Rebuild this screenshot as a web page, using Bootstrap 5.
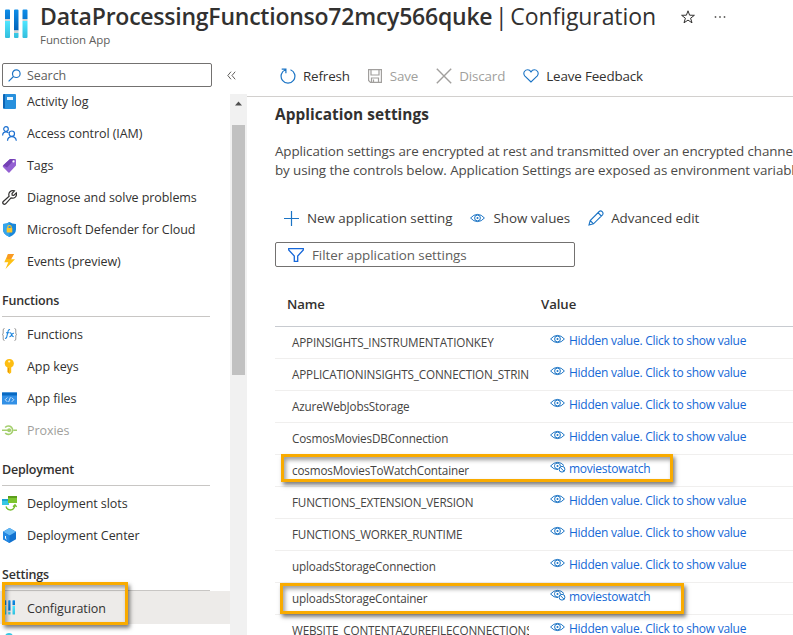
<!DOCTYPE html>
<html lang="en">
<head>
<meta charset="utf-8">
<title>Configuration</title>
<link href="https://cdn.jsdelivr.net/npm/bootstrap@5.3.0/dist/css/bootstrap.min.css" rel="stylesheet">
<style>
body{font-family:"Open Sans","Noto Sans",sans-serif;font-size:12.5px;letter-spacing:-.07px;color:#323130;height:635px;line-height:20px}
svg{flex:none;display:block}
.app-head{height:63px;padding:1px 0 0 5px}
.app-logo{margin-top:8px}
.app-title{font-size:23px;line-height:30px;letter-spacing:-.08px;word-spacing:-3.2px;margin:0 0 1px}
.app-title b{font-weight:600;letter-spacing:-.23px}
.app-sub{font-size:11.5px;color:#605e5c;line-height:16px;letter-spacing:-.06px}
.side{width:247px}
.search-box{width:210px;height:24px;margin-left:2px;border:1px solid #737170;border-radius:2px;color:#605e5c;padding-left:5px;gap:6px}
.search-box span{padding-top:2px}
.collapse-mark{margin-left:15px}
.side-list{width:230px;margin-top:-9px}
.side-scroll{height:541px;margin-top:7px}
.side-item{height:32px;padding:2px 0 0 2px;gap:10px}
.side-item svg{width:15px;height:15px;margin-top:-2px}
.side-item.off{color:#a19f9d}
.side-item.off svg{opacity:.75}
.side-item.on{background:#edebe9;height:33px;margin-top:-1px}
.side-title{height:40px;width:208px;margin:0 0 1px 2px;padding-top:14px;border-bottom:1px solid #c8c6c4;font-weight:600;letter-spacing:-.2px}
.bar{width:17px;background:#f1f1f1;padding-top:7px}
.thumb{width:13px;height:250px;background:#c1c1c1;margin-top:19px}
.cmds{height:34px;border-bottom:1px solid #d2d0ce;font-size:13.4px;letter-spacing:-.15px;padding:0 0 8px 33px}
.off-cmd{color:#a19f9d}
.gap-l{margin-left:18px}
.gap-s{margin-left:7px}
.pane{padding-left:28px;width:546px}
.pane h2{font-size:15.4px;font-weight:700;letter-spacing:.05px;line-height:20px;margin:8px 0 17px}
.desc{font-size:13.4px;line-height:19px;letter-spacing:-.1px;margin:0;color:#4b4a48}
.cmds2{font-size:13.4px;letter-spacing:-.03px;height:30px;margin-top:23px;padding-left:9px;color:#3f3e3c}
.filter{width:300px;height:25px;margin-top:9px;border:1px solid #737170;border-radius:2px;font-size:13.4px;letter-spacing:-.05px;color:#605e5c;padding-left:12px;gap:8px}
.grid-head{height:60px;border-bottom:1px solid #c8cbd0;font-size:13.2px;font-weight:600;padding-top:27px}
.grid-head div:first-child{padding-left:12px;width:266px}
.grid-row{height:32px;border-bottom:1px solid #f0efee}
.cell-name{width:254px;padding:0 0 0 17px;font-size:11.7px;line-height:30px;letter-spacing:-.16px;white-space:nowrap;overflow:hidden;color:#454442}
.cell-val{padding-left:21px;gap:4px;color:#1568d6;height:28px;font-size:12px;letter-spacing:-.26px}
.cell-val svg{margin-top:-5px}
.cell-val .hid{margin-right:-1px}
.callout{border:3px solid #f9ab00;box-shadow:2px 3px 4px rgba(0,0,0,.5),inset 2px 3px 4px rgba(0,0,0,.38);z-index:2}
.c-side{left:2px;top:-9px;width:126px;height:43px}
.c-one{left:6px;top:-1px;width:392px;height:28px}
.c-two{left:5px;top:0;width:404px;height:31px}
</style>
<script src="https://cdn.jsdelivr.net/npm/bootstrap@5.3.0/dist/js/bootstrap.bundle.min.js"></script>
</head>
<body class="bg-white overflow-hidden">
<svg width="0" height="0" class="position-absolute">
<defs>
<linearGradient id="gb" x1="0" y1="0" x2="0" y2="1"><stop offset="0" stop-color="#0f8de8"/><stop offset="1" stop-color="#0062b8"/></linearGradient>
<linearGradient id="gc" x1="0" y1="0" x2="0" y2="1"><stop offset="0" stop-color="#50e6ff"/><stop offset="1" stop-color="#32bedd"/></linearGradient>
</defs>
<symbol id="eye" viewBox="0 0 15 10"><g fill="none" stroke="#1b74c5"><path d="M.6 5Q3.6 1.4 7.5 1.4T14.4 5Q11.4 8.6 7.5 8.6T.6 5Z"/><circle cx="7.5" cy="5" r="2.9"/></g><circle cx="7.5" cy="5" r="1" fill="#1b74c5"/></symbol>
<symbol id="eyeoff" viewBox="0 0 16 12"><g fill="none" stroke="#1b74c5"><path d="M8 8.6Q3.500 8.600 .6 5Q3.600 1.400 7.500 1.400Q11.500 1.400 14 4.600M8.500 7.700A2.900 2.900 0 1 1 10.300 5"/><circle cx="12" cy="8.200" r="2.900"/><path d="M10 6.200l4 4"/></g><circle cx="7.500" cy="5" r="1" fill="#1b74c5"/></symbol>
<symbol id="sliders" viewBox="0 0 23 30"><path fill="url(#gb)" d="M0 10V1.500Q0 .5 1 .5H4Q5 .5 5 1.500V10ZM9 21.500V1.500Q9 .5 10 .5H12.500Q13.500 .5 13.500 1.500V21.500ZM17.500 10V1.500Q17.500 .5 18.500 .5H21.500Q22.500 .5 22.500 1.500V10Z"/><path fill="url(#gc)" d="M0 12H5V28Q5 29 4 29H1Q0 29 0 28ZM9 24H13.500V28Q13.500 29 12.500 29H10Q9 29 9 28ZM17.500 12H22.500V28Q22.500 29 21.500 29H18.500Q17.500 29 17.500 28Z"/><path fill="#d5d5d5" d="M0 10H5V12H0ZM9 21.500H13.500V24H9ZM17.500 10H22.500V12H17.500Z"/></symbol>
</svg>

<header class="app-head d-flex">
  <svg class="app-logo" width="23" height="30"><use href="#sliders"/></svg>
  <div class="ps-2 ms-1">
    <div class="d-flex align-items-center">
      <h1 class="app-title text-nowrap fw-normal"><b>DataProcessingFunctionso72mcy566quke</b> | Configuration</h1>
      <svg class="ms-4" width="16" height="16" viewBox="0 0 16 16"><path d="M8 1.800l1.600 4.400 4.800.1-3.800 2.900 1.400 4.600L8 11.100l-4 2.700 1.400-4.600L1.600 6.300l4.800-.1Z" fill="none" stroke="#323130"/></svg>
      <svg class="ms-3" width="14" height="4" viewBox="0 0 14 4"><g fill="#605e5c"><circle cx="3.500" cy="2" r=".9"/><circle cx="8" cy="2" r=".9"/><circle cx="12.500" cy="2" r=".9"/></g></svg>
    </div>
    <div class="app-sub">Function App</div>
  </div>
</header>

<div class="d-flex">
  <aside class="side flex-shrink-0">
    <div class="d-flex align-items-center">
      <div class="search-box d-flex align-items-center">
        <svg width="13" height="13" viewBox="0 0 13 13"><g fill="none" stroke="#1b74c5" stroke-width="1.200"><circle cx="8.300" cy="4.700" r="3.800"/><path d="M5.500 7.500L.6 12.400"/></g></svg><span>Search</span>
      </div>
      <svg class="collapse-mark" width="9" height="9" viewBox="0 0 9 9"><path d="M4 .7L.8 4.500 4 8.300M8.200 .7L5 4.500 8.200 8.300" fill="none" stroke="#605e5c"/></svg>
    </div>
    <div class="side-scroll d-flex overflow-hidden">
      <nav class="side-list flex-shrink-0">
        <div class="side-item d-flex align-items-center"><svg viewBox="0 0 15 15"><rect x="1" y="0" width="13" height="15" rx="1" fill="#2790dd"/><path d="M1 1v13h2V0Q1 0 1 1" fill="#0c64b5"/><rect x="5" y="3" width="6" height="3" fill="#e8f5ff"/></svg>Activity log</div>
        <div class="side-item d-flex align-items-center"><svg viewBox="0 0 15 15"><g fill="none" stroke="#1b6fd0" stroke-width="1.200"><circle cx="4" cy="3" r="2.300"/><path d="M.6 9.500Q.8 5.900 4 5.900q1.500 0 2.400 1"/><circle cx="9.800" cy="7.700" r="2.700"/><path d="M5.500 14.800Q5.800 10.700 9.800 10.700T14.300 14.800"/></g></svg>Access control (IAM)</div>
        <div class="side-item d-flex align-items-center"><svg viewBox="0 0 15 15"><path d="M1 7.500L7.500 1.500Q8 1 9 1H13Q14 1 14 2V7.500L7.500 14.500Q7 15 6.400 14.500L1 9Q.4 8.200 1 7.500Z" fill="#9461d2"/><path d="M1 7.500L8 1H13L5 9.500Z" fill="#7441b5"/><circle cx="11.500" cy="3.400" r="1.100" fill="#fff"/></svg>Tags</div>
        <div class="side-item d-flex align-items-center"><svg viewBox="0 0 15 15"><path d="M1.300 11.500L7.100 6.200Q6.200 3.300 8 1.700 9.800.1 12.400.9L10 3.500l.2 1.600 1.600.2L14.300 2.800Q15 5.500 13.300 7.100 11.500 8.700 9 7.900L3.600 13.800Q2.400 14.800 1.200 13.800.2 12.600 1.300 11.500Z" fill="none" stroke="#323130" stroke-width="1.200"/></svg>Diagnose and solve problems</div>
        <div class="side-item d-flex align-items-center"><svg viewBox="0 0 15 15"><path d="M7.500 0Q10 2 14 2V7.500Q14 12 7.500 15 1 12 1 7.500V2Q5 2 7.500 0Z" fill="#1988dc"/><path d="M7.500 0Q5 2 1 2V7.500Q1 12 7.500 15Z" fill="#35a5ec"/><rect x="4.700" y="6" width="5.600" height="4.500" rx=".6" fill="#ffc727"/><path d="M5.800 6.200V5Q5.800 3.500 7.500 3.500T9.200 5V6.200" fill="none" stroke="#ffc727" stroke-width="1.100"/></svg>Microsoft Defender for Cloud</div>
        <div class="side-item d-flex align-items-center"><svg viewBox="0 0 15 15"><path d="M6 0H12L9 5.300H13L3.500 15 6.300 8.300H2.300Z" fill="#fdc014"/><path d="M6 0H12L9 5.300 4.500 5Z" fill="#f99a24"/></svg>Events (preview)</div>
        <div class="side-title">Functions</div>
        <div class="side-item d-flex align-items-center"><svg viewBox="0 0 15 15"><path d="M2.500 1.500Q1.200 1.500 1.200 3V6Q1.200 7.500.3 7.500 1.200 7.500 1.200 9V12Q1.200 13.500 2.500 13.500M12.500 1.500Q13.800 1.500 13.800 3V6Q13.800 7.500 14.700 7.500 13.800 7.500 13.800 9V12Q13.800 13.500 12.500 13.500" fill="none" stroke="#999"/><path d="M8 2.800Q6.500 2.200 6 4.500L4.700 10Q4.200 11.700 3 11.300M4 5.700H7.500M8 6Q9 5.500 9.500 7.500T11.700 9.700M12 6.200Q10.500 6 9.600 8T7.300 9.800" fill="none" stroke="#1b84dd" stroke-width="1.100"/></svg>Functions</div>
        <div class="side-item d-flex align-items-center"><svg viewBox="0 0 15 15"><path d="M7.200 0A4.500 4.500 0 0 1 9.200 8.600V13.500L7.500 15 5.400 13V8.600A4.500 4.500 0 0 1 7.200 0Z" fill="#fdbd12"/><circle cx="7.200" cy="2.500" r="1.100" fill="#fff5d0"/><path d="M6.400 9V13.500" stroke="#e89400"/></svg>App keys</div>
        <div class="side-item d-flex align-items-center"><svg viewBox="0 0 15 15"><rect y="1.500" width="15" height="12" rx=".6" fill="#3290e6"/><path d="M0 1.500H15V4.500H0Z" fill="#0869c2"/><path d="M5.300 6.500L3.200 8.700 5.300 10.900M9.700 6.500L11.800 8.700 9.700 10.900M8.400 6.300L6.600 11.100" fill="none" stroke="#c9e4ff"/></svg>App files</div>
        <div class="side-item off d-flex align-items-center"><svg viewBox="0 0 15 15"><g fill="none" stroke="#86bf3d" stroke-width="1.600"><path d="M0 7.200H7M3.200 4.500A4.200 4.200 0 1 1 3.200 9.900M11.500 7.200H15"/></g><circle cx="7.200" cy="7.200" r="2" fill="#86bf3d"/></svg>Proxies</div>
        <div class="side-title">Deployment</div>
        <div class="side-item d-flex align-items-center"><svg viewBox="0 0 15 15"><rect y="3" width="7" height="6" fill="#37c7e4"/><path d="M0 3H6V5H0Z" fill="#1aa3cf"/><rect x="6" y="0" width="9" height="7" fill="#7cc52f"/><path d="M6 0H15V2H6Z" fill="#5c9e1c"/><path d="M4 10.500Q5 14 8.500 14T13 9.500M11 10.800L13 8.800 14.700 10.800" fill="none" stroke="#76bc2d" stroke-width="1.300"/></svg>Deployment slots</div>
        <div class="side-item d-flex align-items-center"><svg viewBox="0 0 15 15"><path d="M7.500 0L14 3.700V11.300L7.500 15 1 11.300V3.700Z" fill="#1272cf"/><path d="M7.500 0L14 3.700 7.500 7.400 1 3.700Z" fill="#63b8f5"/><path d="M1 3.700L7.500 7.400V15L1 11.300Z" fill="#2288e3"/><path d="M3.500 8v2.500l1 .6" fill="none" stroke="#fff"/></svg>Deployment Center</div>
        <div class="side-title">Settings</div>
        <div class="side-item on d-flex align-items-center position-relative"><svg viewBox="-3.500 0 30 30"><use href="#sliders" width="23" height="30"/></svg>Configuration<div class="callout c-side position-absolute"></div></div>
        <div class="side-item d-flex align-items-center"><svg viewBox="0 0 15 15"><circle cx="7" cy="4" r="4" fill="#32c8e4"/><path d="M1 15Q1 8 7 8T13 15Z" fill="#32c8e4"/></svg></div>
      </nav>
      <div class="bar flex-shrink-0 d-flex flex-column align-items-center">
        <svg width="7" height="5" viewBox="0 0 7 5"><path d="M0 4.500L3.500 .5 7 4.500Z" fill="#505050"/></svg>
        <div class="thumb"></div>
      </div>
    </div>
  </aside>

  <main class="flex-grow-1 overflow-hidden">
    <div class="cmds d-flex align-items-center text-nowrap">
      <svg width="16" height="16" viewBox="0 0 16 16"><path d="M5.500 1.700A6.900 6.900 0 1 0 10.500 1.700M1.700 1.100H5.900V5.300" fill="none" stroke="#1b74c5" stroke-width="1.200"/></svg><span class="gap-s">Refresh</span>
      <svg class="gap-l" width="14" height="14" viewBox="0 0 14 14"><path d="M.6.600H13.400V13.400H2.500L.6 11.500ZM3 .6V6H11V.6M3.500 13.400V9H10.500V13.400M5.500 10.500V13" fill="none" stroke="#a19f9d" stroke-width="1.200"/></svg><span class="off-cmd ms-2">Save</span>
      <svg class="gap-l" width="16" height="16" viewBox="0 0 16 16"><path d="M.8.800L15.200 15.200M15.200.800L.8 15.200" stroke="#a19f9d" stroke-width="1.400"/></svg><span class="off-cmd gap-s">Discard</span>
      <svg class="gap-l" width="16" height="14" viewBox="0 0 16 14"><path d="M8 13L1.700 6.800Q.1 4.700 1.400 2.500 2.700.8 4.700.8 6.700.8 8 2.900 9.300.8 11.300.8T14.600 2.500Q15.900 4.700 14.300 6.800Z" fill="none" stroke="#1b74c5" stroke-width="1.100"/></svg><span class="gap-s">Leave Feedback</span>
    </div>
    <div class="pane">
      <h2>Application settings</h2>
      <p class="desc text-nowrap">Application settings are encrypted at rest and transmitted over an encrypted channel.<br>by using the controls below. Application Settings are exposed as environment variables</p>
      <div class="cmds2 d-flex align-items-center text-nowrap">
        <svg width="15" height="15" viewBox="0 0 15 15"><path d="M7.500 0V15M0 7.500H15" stroke="#1b74c5" stroke-width="1.200"/></svg><span class="ms-2">New application setting</span>
        <svg class="gap-l" width="15" height="10"><use href="#eye"/></svg><span class="ms-2">Show values</span>
        <svg class="gap-l" width="16" height="16" viewBox="0 0 16 16"><path d="M1 15L2.200 10.500 11.200 1.500Q12.700.2 14.200 1.700T14.500 4.800L5.500 13.800ZM10 2.700L13.300 6M2.200 10.500L5.500 13.800" fill="none" stroke="#1b74c5" stroke-width="1.100"/></svg><span class="gap-s">Advanced edit</span>
      </div>
      <div class="filter d-flex align-items-center">
        <svg width="16" height="14" viewBox="0 0 16 14"><path d="M.7.700H15.300V2L9.700 8V13.400H6.300V8L.7 2Z" fill="none" stroke="#1667d9" stroke-width="1.300"/></svg><span>Filter application settings</span>
      </div>
      <div class="grid-head d-flex"><div>Name</div><div>Value</div></div>
      <div class="grid-row d-flex"><div class="cell-name">APPINSIGHTS_INSTRUMENTATIONKEY</div><div class="cell-val d-flex align-items-center"><svg width="15" height="10"><use href="#eye"/></svg>Hidden value. Click to show value</div></div>
      <div class="grid-row d-flex"><div class="cell-name">APPLICATIONINSIGHTS_CONNECTION_STRING</div><div class="cell-val d-flex align-items-center"><svg width="15" height="10"><use href="#eye"/></svg>Hidden value. Click to show value</div></div>
      <div class="grid-row d-flex"><div class="cell-name">AzureWebJobsStorage</div><div class="cell-val d-flex align-items-center"><svg width="15" height="10"><use href="#eye"/></svg>Hidden value. Click to show value</div></div>
      <div class="grid-row d-flex"><div class="cell-name">CosmosMoviesDBConnection</div><div class="cell-val d-flex align-items-center"><svg width="15" height="10"><use href="#eye"/></svg>Hidden value. Click to show value</div></div>
      <div class="grid-row d-flex position-relative"><div class="cell-name">cosmosMoviesToWatchContainer</div><div class="cell-val d-flex align-items-center"><svg class="hid" width="16" height="12"><use href="#eyeoff"/></svg>moviestowatch</div><div class="callout c-one position-absolute"></div></div>
      <div class="grid-row d-flex"><div class="cell-name">FUNCTIONS_EXTENSION_VERSION</div><div class="cell-val d-flex align-items-center"><svg width="15" height="10"><use href="#eye"/></svg>Hidden value. Click to show value</div></div>
      <div class="grid-row d-flex"><div class="cell-name">FUNCTIONS_WORKER_RUNTIME</div><div class="cell-val d-flex align-items-center"><svg width="15" height="10"><use href="#eye"/></svg>Hidden value. Click to show value</div></div>
      <div class="grid-row d-flex"><div class="cell-name">uploadsStorageConnection</div><div class="cell-val d-flex align-items-center"><svg width="15" height="10"><use href="#eye"/></svg>Hidden value. Click to show value</div></div>
      <div class="grid-row d-flex position-relative"><div class="cell-name">uploadsStorageContainer</div><div class="cell-val d-flex align-items-center"><svg class="hid" width="16" height="12"><use href="#eyeoff"/></svg>moviestowatch</div><div class="callout c-two position-absolute"></div></div>
      <div class="grid-row d-flex"><div class="cell-name">WEBSITE_CONTENTAZUREFILECONNECTIONSTRING</div><div class="cell-val d-flex align-items-center"><svg width="15" height="10"><use href="#eye"/></svg>Hidden value. Click to show value</div></div>
    </div>
  </main>
</div>
</body>
</html>
